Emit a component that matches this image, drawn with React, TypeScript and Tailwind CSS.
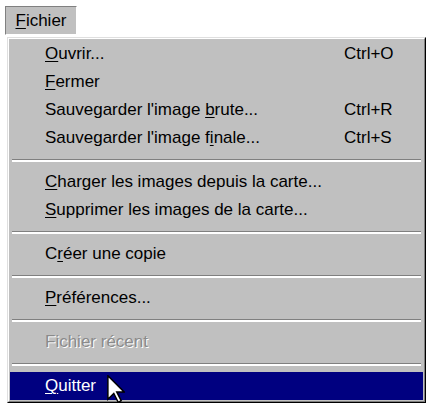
const font = { fontFamily: '"Liberation Sans", Arial, sans-serif' };

type Item =
  | { kind: "sep" }
  | { kind: "item"; pre: string; key?: string; post: string; shortcut?: string; disabled?: boolean; active?: boolean };

const items: Item[] = [
  { kind: "item", pre: "", key: "O", post: "uvrir...", shortcut: "Ctrl+O" },
  { kind: "item", pre: "", key: "F", post: "ermer" },
  { kind: "item", pre: "Sauvegarder l'image ", key: "b", post: "rute...", shortcut: "Ctrl+R" },
  { kind: "item", pre: "Sauvegarder l'image f", key: "i", post: "nale...", shortcut: "Ctrl+S" },
  { kind: "sep" },
  { kind: "item", pre: "", key: "C", post: "harger les images depuis la carte..." },
  { kind: "item", pre: "", key: "S", post: "upprimer les images de la carte..." },
  { kind: "sep" },
  { kind: "item", pre: "C", key: "r", post: "éer une copie" },
  { kind: "sep" },
  { kind: "item", pre: "", key: "P", post: "références..." },
  { kind: "sep" },
  { kind: "item", pre: "Fichier récent", post: "", disabled: true },
  { kind: "sep" },
  { kind: "item", pre: "", key: "Q", post: "uitter", active: true },
];

// mouse pointer resting on "Quitter"
function Cursor() {
  return (
    <svg
      className="absolute left-[107px] top-[375px]"
      width="18"
      height="28"
      viewBox="0 0 12 19"
    >
      <polygon
        points="0.5,0.5 0.5,16.5 4.5,12.5 7.5,18.5 9.5,17.5 6.5,11.5 11.5,11.5"
        fill="#fff"
        stroke="#000"
        strokeWidth="1"
        strokeLinejoin="miter"
      />
    </svg>
  );
}

export default function App() {
  return (
    <div className="relative h-[407px] w-[432px] overflow-hidden bg-white text-[17px] text-black" style={font}>
      <div className="pl-[5px] pt-[6px]">
        <div className="flex h-[29px] w-[72px] items-center justify-center border border-t-[#808080] border-l-[#808080] border-r-white border-b-white bg-[#c0c0c0]">
          <span>
            <span className="underline decoration-1 underline-offset-2">F</span>ichier
          </span>
        </div>
      </div>

      <div className="ml-[7px] mt-[2px] w-[419px] border border-t-[#dfdfdf] border-l-[#dfdfdf] border-r-black border-b-black">
        <div className="border border-t-white border-l-white border-r-[#808080] border-b-[#808080] bg-[#c0c0c0] p-px">
          {items.map((it, i) =>
            it.kind === "sep" ? (
              <div key={i} className="flex h-[16px] flex-col justify-center px-[2px]">
                <div className="h-px bg-[#808080]" />
                <div className="h-[2px] bg-white" />
              </div>
            ) : (
              <div
                key={i}
                className={
                  "flex h-[28px] items-center pl-[35px] " +
                  (it.active ? "bg-[#000080] text-white" : "") +
                  (it.disabled ? " text-[#8a8a8a] [text-shadow:1px_1px_0_#fff]" : "")
                }
              >
                <span className="w-[299px] whitespace-pre">
                  {it.pre}
                  {it.key && <span className="underline decoration-1 underline-offset-2">{it.key}</span>}
                  {it.post}
                </span>
                {it.shortcut && <span>{it.shortcut}</span>}
              </div>
            )
          )}
        </div>
      </div>

      <Cursor />
    </div>
  );
}
